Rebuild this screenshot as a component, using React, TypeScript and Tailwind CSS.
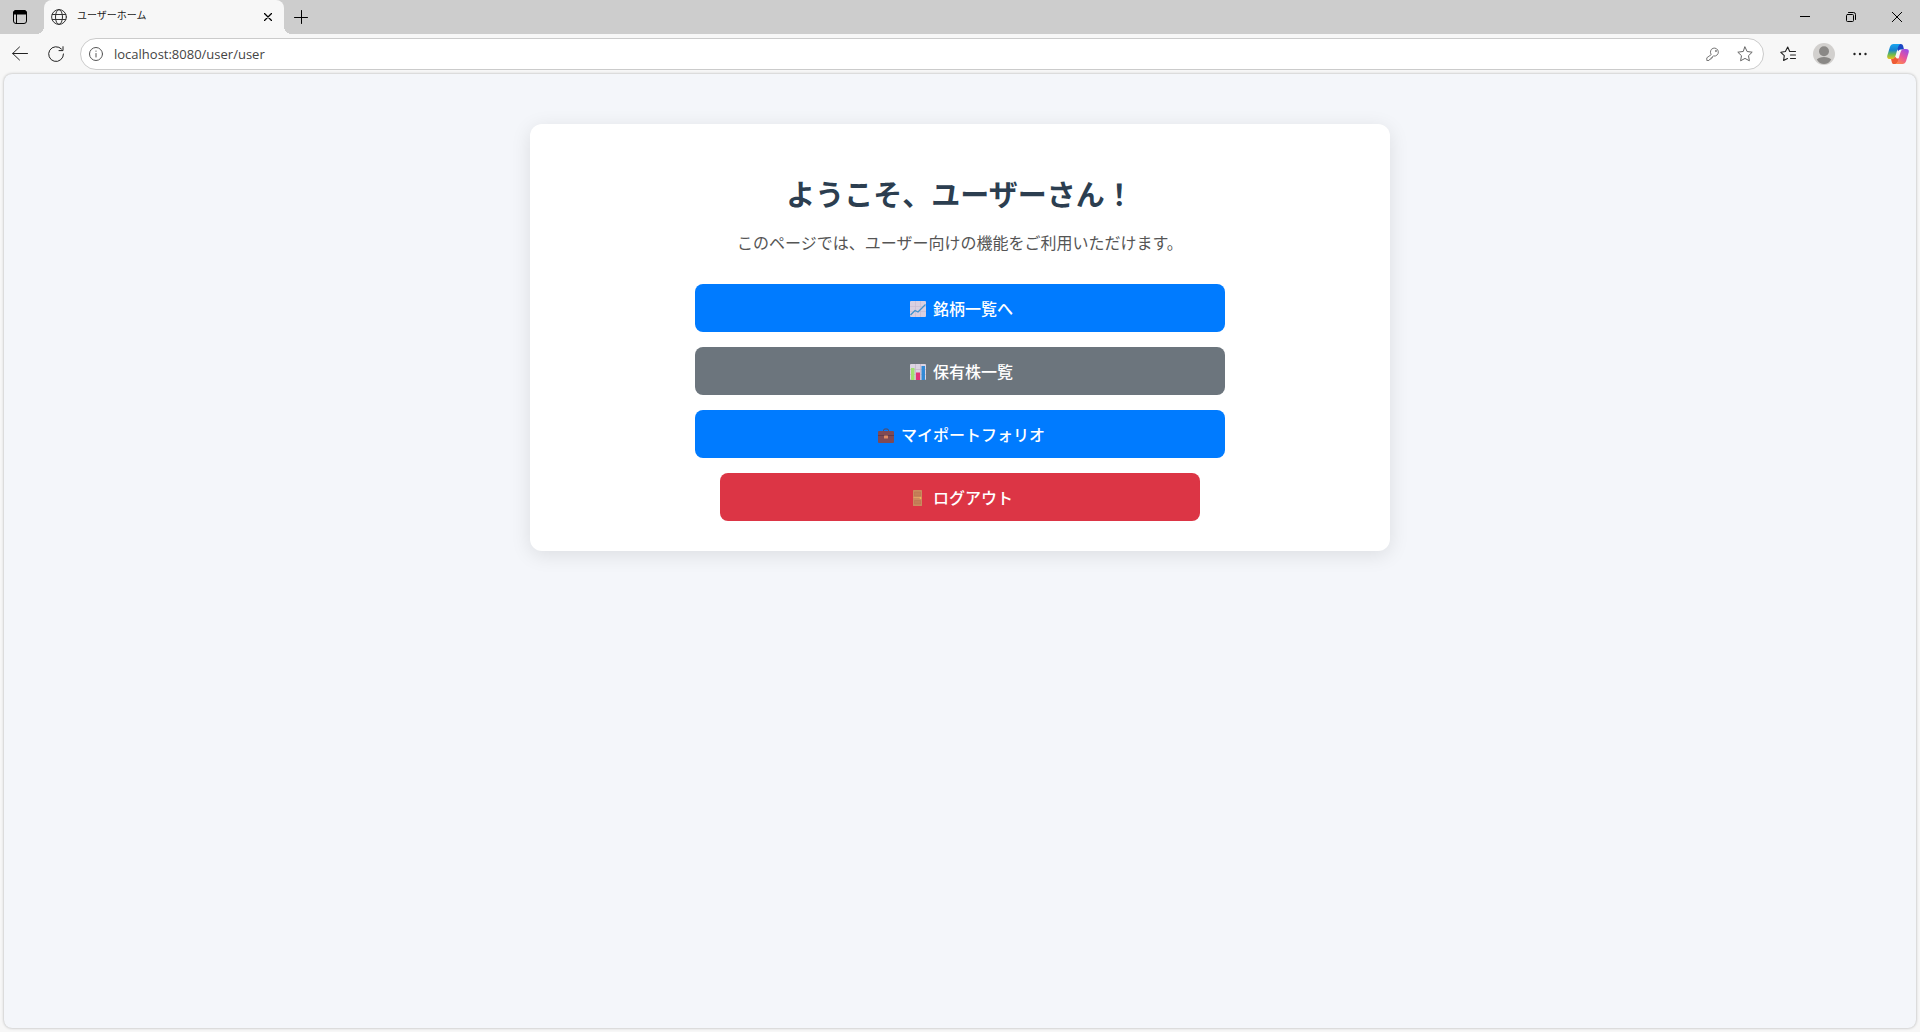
import React from "react";

type IconProps = { className?: string; children: React.ReactNode; box?: string };

function Line({ className = "size-4", children, box = "0 0 16 16" }: IconProps) {
  return (
    <svg aria-hidden="true" viewBox={box} className={className} fill="none" stroke="currentColor" strokeWidth="1" strokeLinecap="round" strokeLinejoin="round">
      {children}
    </svg>
  );
}

const star = "M8 1 L10.1 5.5 L15.2 6.2 L11.5 9.7 L12.4 14.8 L8 12.4 L3.6 14.8 L4.5 9.7 L0.8 6.2 L5.9 5.5 Z";

function TitleBar() {
  return (
    <div className="flex h-[34px] items-stretch bg-[#cdcdcd]">
      <button aria-label="タブ操作メニュー" className="flex w-11 items-center pl-3 text-black">
        <svg aria-hidden="true" viewBox="0 0 16 16" className="size-4" fill="none" stroke="currentColor">
          <rect x="1.5" y="1.5" width="13" height="13" rx="2.5" strokeWidth="1" />
          <path d="M1.5 5V4C1.5 2.5 2.5 1.500 4 1.500H12C13.500 1.500 14.500 2.500 14.500 4V5Z" fill="currentColor" />
          <path d="M4.500 5V14.500" />
        </svg>
      </button>
      <div className="relative flex w-60 items-center rounded-t-lg bg-[#f7f7f7] pl-[7px] pr-2">
        <span className="absolute bottom-0 -left-2 size-2 bg-[radial-gradient(circle_at_top_left,#cdcdcd_8px,#f7f7f7_8px)]" />
        <span className="absolute bottom-0 -right-2 size-2 bg-[radial-gradient(circle_at_top_right,#cdcdcd_8px,#f7f7f7_8px)]" />
        <Line className="size-4 text-[#333]">
          <circle cx="8" cy="8" r="7.400" />
          <ellipse cx="8" cy="8" rx="3.500" ry="7.400" />
          <path d="M1.300 5.500H14.700M1.300 10.500H14.700" />
        </Line>
        <span className="ml-2.5 flex-1 pb-1 text-[10px] leading-4 text-[#222]">ユーザーホーム</span>
        <button aria-label="タブを閉じる" className="p-1 text-black">
          <Line className="size-2" box="0 0 8 8"><path d="M.5 .5L7.500 7.500M7.500 .5L.5 7.500" strokeWidth="1.300" /></Line>
        </button>
      </div>
      <button aria-label="新しいタブ" className="px-2.5 text-black">
        <Line className="size-3.5" box="0 0 14 14"><path d="M7.500 .5V13.500M.5 7.500H13.500" /></Line>
      </button>
      <div className="flex-1" />
      <button aria-label="最小化" className="flex w-[46px] items-center justify-center text-black">
        <svg aria-hidden="true" viewBox="0 0 10 10" className="size-2.5"><path d="M0 4H10V5H0Z" fill="currentColor" /></svg>
      </button>
      <button aria-label="元に戻す" className="flex w-[46px] items-center justify-center text-black">
        <Line className="size-2.5" box="0 0 10 10"><rect x=".5" y="2.500" width="7" height="7" rx="1" /><path d="M2.500 .5H7.500Q9.500 .5 9.500 2.500V7.500" /></Line>
      </button>
      <button aria-label="閉じる" className="flex w-[46px] items-center justify-center text-black">
        <Line className="size-2.5" box="0 0 10 10"><path d="M.3 .3L9.700 9.700M9.700 .3L.3 9.700" /></Line>
      </button>
    </div>
  );
}

function CopilotLogo() {
  return (
    <svg aria-hidden="true" viewBox="0 0 22 20" className="h-5 w-[22px]">
      <defs>
        <linearGradient id="cpA" x1="0" y1="0" x2="0" y2="1">
          <stop offset="0" stopColor="#1aa5f0" /><stop offset=".4" stopColor="#1683d0" /><stop offset=".7" stopColor="#6dbb51" /><stop offset="1" stopColor="#e8c31a" />
        </linearGradient>
        <linearGradient id="cpB" x1=".8" y1="0" x2=".2" y2="1">
          <stop offset="0" stopColor="#9a4be8" /><stop offset=".5" stopColor="#e8539a" /><stop offset="1" stopColor="#ff8a4a" />
        </linearGradient>
      </defs>
      <path d="M10 0H14Q15.600 0 16.100 1.800L17 5.500H13.500Q11.800 5.500 11.200 7.200L9 3Z" fill="#1b48c4" />
      <path d="M6 20Q5 19.500 4.700 17.800L4 14.800Q7 14.800 8 12.500L9.800 14.500H12.500L11 18Q10.300 20 8.500 20Z" fill="#ee5b35" />
      <path d="M6.500 0H13.500Q11.900 0.600 11.300 2.500L8.500 11.800Q7.500 15 4.600 15H3Q-.6 15 .4 11.200L2.900 3Q3.900 0 6.500 0Z" fill="url(#cpA)" />
      <path d="M15.500 20H8.500Q10.100 19.400 10.700 17.500L13.500 8.200Q14.500 5 17.400 5H19Q22.600 5 21.600 8.800L19.100 17Q18.100 20 15.500 20Z" fill="url(#cpB)" />
    </svg>
  );
}

function Toolbar() {
  return (
    <div className="flex h-10 items-center bg-[#f7f7f7] pr-[11px] pl-3 text-[#222]">
      <button aria-label="戻る"><Line><path d="M15.500 7.500H.7M7.500 1L.7 7.500L7.500 14" /></Line></button>
      <button aria-label="更新" className="ml-5">
        <Line><path d="M15.500 8A7.400 7.400 0 1 1 13.500 3M15 .7V4.600H11" /></Line>
      </button>
      <div className="ml-4 flex h-8 flex-1 items-center rounded-full border border-[#cbcbcb] bg-white pr-2.5 pl-2">
        <button aria-label="サイト情報" className="text-[#555]">
          <Line className="size-3.5" box="0 0 14 14"><circle cx="7" cy="7" r="6.500" /><path d="M7 6.500V10M7 4V4.300" /></Line>
        </button>
        <input aria-label="アドレス" defaultValue="localhost:8080/user/user" className="ml-[11px] min-w-0 flex-1 bg-transparent pt-px font-['Open_Sans',sans-serif] text-[13px] text-[#444] outline-none" />
        <button aria-label="パスワード" className="text-[#777]">
          <Line className="size-3.5" box="0 0 14 14"><path d="M5 7.300A4 4 0 1 1 7.500 9L6.500 9.500V10.700H5.200V12H4L3 13.500H.8V11.200Z" /><circle cx="9.800" cy="4" r=".5" /></Line>
        </button>
        <button aria-label="お気に入りに追加" className="ml-[17px] text-[#666]"><Line><path d={star} /></Line></button>
      </div>
      <button aria-label="お気に入り" className="ml-4">
        <Line><path d="M7.500 12.500L3.600 14.500L4.300 9.700L.8 6.300L5.400 5.500L7.700 1L9.700 5.500H15.500M10.500 9H15.500M10.500 12.500H15.500" strokeWidth="1.100" /></Line>
      </button>
      <button aria-label="プロフィール" className="ml-[17px]">
        <svg aria-hidden="true" viewBox="0 0 22 22" className="size-[22px]">
          <circle cx="11" cy="11" r="11" fill="#d2d0ce" /><circle cx="11" cy="8.200" r="5" fill="#8a8886" /><path d="M3.800 16.500Q6 14 11 14Q16 14 18.200 16.500Q15.500 21 11 21Q6.500 21 3.800 16.500Z" fill="#8a8886" />
        </svg>
      </button>
      <button aria-label="設定など" className="ml-[18px]">
        <svg aria-hidden="true" viewBox="0 0 14 4" className="h-1 w-3.5" fill="currentColor"><circle cx="1.500" cy="2" r="1.200" /><circle cx="7" cy="2" r="1.200" /><circle cx="12.500" cy="2" r="1.200" /></svg>
      </button>
      <button aria-label="Copilot" className="ml-5"><CopilotLogo /></button>
    </div>
  );
}

function Emoji({ children }: { children: React.ReactNode }) {
  return <svg aria-hidden="true" viewBox="0 -2 22 18" className="h-[18px] w-[22px]">{children}</svg>;
}

const chartUp = (
  <Emoji>
    <rect x="3" width="16" height="16" rx="1" fill="#d9cfe0" />
    <path d="M3 5.500H19M3 10.500H19M8.500 0V16M13.500 0V16" stroke="#c9bcd0" strokeWidth=".7" />
    <path d="M3.500 14L8 9.500L11 11L18.500 3.500" fill="none" stroke="#3e93d0" strokeWidth="1.300" />
  </Emoji>
);
const barChart = (
  <Emoji>
    <rect x="3" width="16" height="16" rx="1" fill="#dcd4e2" />
    <path d="M3 5.500H19M3 10.500H19M8.500 0V16M13.500 0V16" stroke="#c3b3cc" strokeWidth=".7" />
    <rect x="4" y="4" width="3.500" height="12" fill="#a0e070" />
    <rect x="9" y="8.500" width="4" height="7.500" fill="#e23478" />
    <rect x="14.500" y="2" width="3.500" height="14" fill="#328ad6" />
  </Emoji>
);
const briefcase = (
  <Emoji>
    <path d="M8.500 4V3.500Q8.500 2 10 2H12Q13.500 2 13.500 3.500V4" fill="none" stroke="#5d4555" />
    <rect x="3" y="4" width="16" height="12" rx="1" fill="#7f4a55" />
    <path d="M3 8.500H19" stroke="#633c49" />
    <rect x="9" y="8.500" width="4" height="3" rx=".5" fill="#e08a62" />
  </Emoji>
);
const door = (
  <Emoji>
    <rect x="6" y="0" width="9" height="16" rx=".5" fill="#cb8a5e" />
    <path d="M7.500 2H13.500V6H7.500ZM7.500 10.500H13.500V14H7.500Z" fill="#c57e58" stroke="#b97650" strokeWidth=".6" />
    <path d="M6.500 7.500H13" stroke="#e0a066" /><circle cx="13.500" cy="8" r=".9" fill="#f3bd57" />
  </Emoji>
);

const action = "flex h-12 w-full items-center justify-center gap-1 rounded-lg text-base font-medium text-white";

function HomeCard() {
  return (
    <section className="mx-auto flex w-full max-w-[860px] flex-col items-center rounded-xl bg-white px-[30px] pt-12 pb-[30px] shadow-[0_4px_20px_rgba(0,0,0,0.1)]">
      <h1 className="text-[29px] leading-[42px] font-bold text-[#2c3e50]">ようこそ、ユーザーさん！</h1>
      <p className="mt-4 text-base leading-6 text-[#555]">このページでは、ユーザー向けの機能をご利用いただけます。</p>
      <nav className="mt-[30px] flex w-full max-w-[530px] flex-col items-center gap-[15px]">
        <a href="#stocks" className={`${action} bg-[#007bff]`}>{chartUp}<span>銘柄一覧へ</span></a>
        <a href="#holdings" className={`${action} bg-[#6c757d]`}>{barChart}<span>保有株一覧</span></a>
        <a href="#portfolio" className={`${action} bg-[#007bff]`}>{briefcase}<span>マイポートフォリオ</span></a>
        <button className={`${action} max-w-[480px] bg-[#dc3545]`}>{door}<span>ログアウト</span></button>
      </nav>
    </section>
  );
}

export default function App() {
  return (
    <div lang="ja" className="flex min-h-screen flex-col bg-[#f7f7f7] font-['Noto_Sans_CJK_JP',sans-serif]">
      <TitleBar />
      <Toolbar />
      <main className="mx-1 mb-1 flex-1 rounded-lg bg-[#f4f6fa] pt-[50px] shadow-[0_0_3px_rgba(0,0,0,0.3)]">
        <HomeCard />
      </main>
    </div>
  );
}
